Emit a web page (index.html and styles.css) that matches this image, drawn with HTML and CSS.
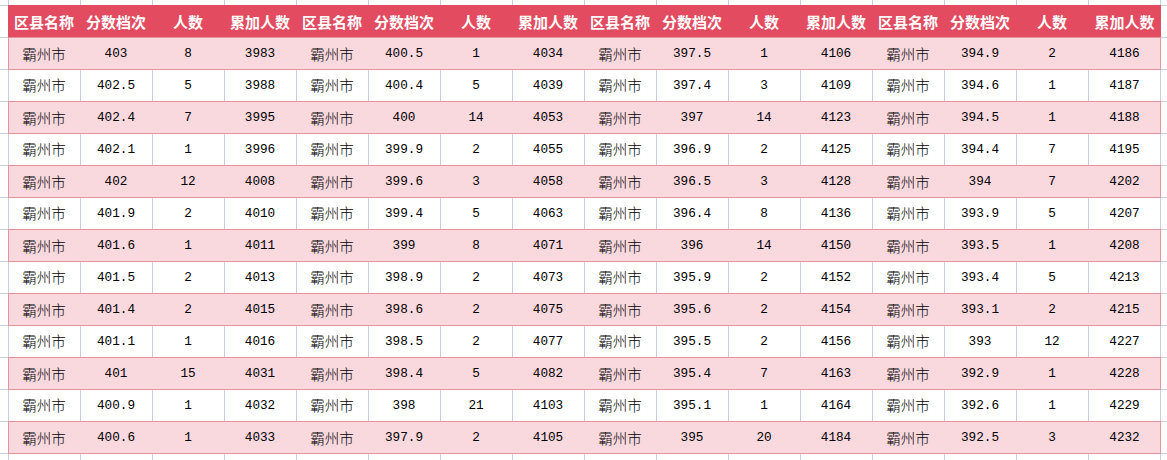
FILE: index.html
```html
<!DOCTYPE html>
<html lang="zh">
<head>
<meta charset="utf-8">
<title>霸州市 分数档次</title>
<link rel="stylesheet" href="styles.css">
</head>
<body>
<div class="sheet">
  <div class="row head">
    <div class="c">区县名称</div><div class="c">分数档次</div><div class="c">人数</div><div class="c">累加人数</div>
    <div class="c">区县名称</div><div class="c">分数档次</div><div class="c">人数</div><div class="c">累加人数</div>
    <div class="c">区县名称</div><div class="c">分数档次</div><div class="c">人数</div><div class="c">累加人数</div>
    <div class="c">区县名称</div><div class="c">分数档次</div><div class="c">人数</div><div class="c">累加人数</div>
  </div>
  <div class="row pink">
    <div class="c cn">霸州市</div><div class="c n">403</div><div class="c n">8</div><div class="c n">3983</div>
    <div class="c cn">霸州市</div><div class="c n">400.5</div><div class="c n">1</div><div class="c n">4034</div>
    <div class="c cn">霸州市</div><div class="c n">397.5</div><div class="c n">1</div><div class="c n">4106</div>
    <div class="c cn">霸州市</div><div class="c n">394.9</div><div class="c n">2</div><div class="c n">4186</div>
  </div>
  <div class="row">
    <div class="c cn">霸州市</div><div class="c n">402.5</div><div class="c n">5</div><div class="c n">3988</div>
    <div class="c cn">霸州市</div><div class="c n">400.4</div><div class="c n">5</div><div class="c n">4039</div>
    <div class="c cn">霸州市</div><div class="c n">397.4</div><div class="c n">3</div><div class="c n">4109</div>
    <div class="c cn">霸州市</div><div class="c n">394.6</div><div class="c n">1</div><div class="c n">4187</div>
  </div>
  <div class="row pink">
    <div class="c cn">霸州市</div><div class="c n">402.4</div><div class="c n">7</div><div class="c n">3995</div>
    <div class="c cn">霸州市</div><div class="c n">400</div><div class="c n">14</div><div class="c n">4053</div>
    <div class="c cn">霸州市</div><div class="c n">397</div><div class="c n">14</div><div class="c n">4123</div>
    <div class="c cn">霸州市</div><div class="c n">394.5</div><div class="c n">1</div><div class="c n">4188</div>
  </div>
  <div class="row">
    <div class="c cn">霸州市</div><div class="c n">402.1</div><div class="c n">1</div><div class="c n">3996</div>
    <div class="c cn">霸州市</div><div class="c n">399.9</div><div class="c n">2</div><div class="c n">4055</div>
    <div class="c cn">霸州市</div><div class="c n">396.9</div><div class="c n">2</div><div class="c n">4125</div>
    <div class="c cn">霸州市</div><div class="c n">394.4</div><div class="c n">7</div><div class="c n">4195</div>
  </div>
  <div class="row pink">
    <div class="c cn">霸州市</div><div class="c n">402</div><div class="c n">12</div><div class="c n">4008</div>
    <div class="c cn">霸州市</div><div class="c n">399.6</div><div class="c n">3</div><div class="c n">4058</div>
    <div class="c cn">霸州市</div><div class="c n">396.5</div><div class="c n">3</div><div class="c n">4128</div>
    <div class="c cn">霸州市</div><div class="c n">394</div><div class="c n">7</div><div class="c n">4202</div>
  </div>
  <div class="row">
    <div class="c cn">霸州市</div><div class="c n">401.9</div><div class="c n">2</div><div class="c n">4010</div>
    <div class="c cn">霸州市</div><div class="c n">399.4</div><div class="c n">5</div><div class="c n">4063</div>
    <div class="c cn">霸州市</div><div class="c n">396.4</div><div class="c n">8</div><div class="c n">4136</div>
    <div class="c cn">霸州市</div><div class="c n">393.9</div><div class="c n">5</div><div class="c n">4207</div>
  </div>
  <div class="row pink">
    <div class="c cn">霸州市</div><div class="c n">401.6</div><div class="c n">1</div><div class="c n">4011</div>
    <div class="c cn">霸州市</div><div class="c n">399</div><div class="c n">8</div><div class="c n">4071</div>
    <div class="c cn">霸州市</div><div class="c n">396</div><div class="c n">14</div><div class="c n">4150</div>
    <div class="c cn">霸州市</div><div class="c n">393.5</div><div class="c n">1</div><div class="c n">4208</div>
  </div>
  <div class="row">
    <div class="c cn">霸州市</div><div class="c n">401.5</div><div class="c n">2</div><div class="c n">4013</div>
    <div class="c cn">霸州市</div><div class="c n">398.9</div><div class="c n">2</div><div class="c n">4073</div>
    <div class="c cn">霸州市</div><div class="c n">395.9</div><div class="c n">2</div><div class="c n">4152</div>
    <div class="c cn">霸州市</div><div class="c n">393.4</div><div class="c n">5</div><div class="c n">4213</div>
  </div>
  <div class="row pink">
    <div class="c cn">霸州市</div><div class="c n">401.4</div><div class="c n">2</div><div class="c n">4015</div>
    <div class="c cn">霸州市</div><div class="c n">398.6</div><div class="c n">2</div><div class="c n">4075</div>
    <div class="c cn">霸州市</div><div class="c n">395.6</div><div class="c n">2</div><div class="c n">4154</div>
    <div class="c cn">霸州市</div><div class="c n">393.1</div><div class="c n">2</div><div class="c n">4215</div>
  </div>
  <div class="row">
    <div class="c cn">霸州市</div><div class="c n">401.1</div><div class="c n">1</div><div class="c n">4016</div>
    <div class="c cn">霸州市</div><div class="c n">398.5</div><div class="c n">2</div><div class="c n">4077</div>
    <div class="c cn">霸州市</div><div class="c n">395.5</div><div class="c n">2</div><div class="c n">4156</div>
    <div class="c cn">霸州市</div><div class="c n">393</div><div class="c n">12</div><div class="c n">4227</div>
  </div>
  <div class="row pink">
    <div class="c cn">霸州市</div><div class="c n">401</div><div class="c n">15</div><div class="c n">4031</div>
    <div class="c cn">霸州市</div><div class="c n">398.4</div><div class="c n">5</div><div class="c n">4082</div>
    <div class="c cn">霸州市</div><div class="c n">395.4</div><div class="c n">7</div><div class="c n">4163</div>
    <div class="c cn">霸州市</div><div class="c n">392.9</div><div class="c n">1</div><div class="c n">4228</div>
  </div>
  <div class="row">
    <div class="c cn">霸州市</div><div class="c n">400.9</div><div class="c n">1</div><div class="c n">4032</div>
    <div class="c cn">霸州市</div><div class="c n">398</div><div class="c n">21</div><div class="c n">4103</div>
    <div class="c cn">霸州市</div><div class="c n">395.1</div><div class="c n">1</div><div class="c n">4164</div>
    <div class="c cn">霸州市</div><div class="c n">392.6</div><div class="c n">1</div><div class="c n">4229</div>
  </div>
  <div class="row pink">
    <div class="c cn">霸州市</div><div class="c n">400.6</div><div class="c n">1</div><div class="c n">4033</div>
    <div class="c cn">霸州市</div><div class="c n">397.9</div><div class="c n">2</div><div class="c n">4105</div>
    <div class="c cn">霸州市</div><div class="c n">395</div><div class="c n">20</div><div class="c n">4184</div>
    <div class="c cn">霸州市</div><div class="c n">392.5</div><div class="c n">3</div><div class="c n">4232</div>
  </div>
</div>
</body>
</html>
```
FILE: styles.css
```css
html, body {
  margin: 0;
}

body {
  width: 1167px;
  height: 460px;
  overflow: hidden;
  box-sizing: border-box;
  padding: 5px 0 0 8px;
  background-color: #ffffff;
  background-image:
    linear-gradient(to right, #c7cee2 1px, transparent 1px),
    linear-gradient(to bottom, #c7cee2 1px, transparent 1px);
  background-size: 72px 100%, 100% 32px;
  background-position: 8px 0, 0 5px;
  font-family: "Noto Sans CJK SC", "DejaVu Sans", sans-serif;
  color: #000;
}

.sheet {
  width: 1153px;
}

.row {
  display: grid;
  grid-template-columns: repeat(15, 72px) 73px;
  height: 32px;
  box-sizing: border-box;
}

.c {
  display: flex;
  align-items: center;
  justify-content: center;
  white-space: nowrap;
  line-height: 1;
}

.head {
  background: #e34b60;
  color: #ffffff;
  font-weight: 700;
  font-size: 15px;
  padding-top: 1px;
}

.pink {
  background: #f9d8de;
  border-top: 1px solid #e8929d;
  box-shadow: inset 1px 0 0 #e8929d, inset -1px 0 0 #e8929d, 0 1px 0 #e8929d;
}

.cn {
  font-size: 14.5px;
  font-weight: 300;
  padding-top: 1px;
}

.n {
  font-family: "Liberation Mono", "DejaVu Sans Mono", monospace;
  font-size: 12.7px;
  padding-top: 2px;
}
```
